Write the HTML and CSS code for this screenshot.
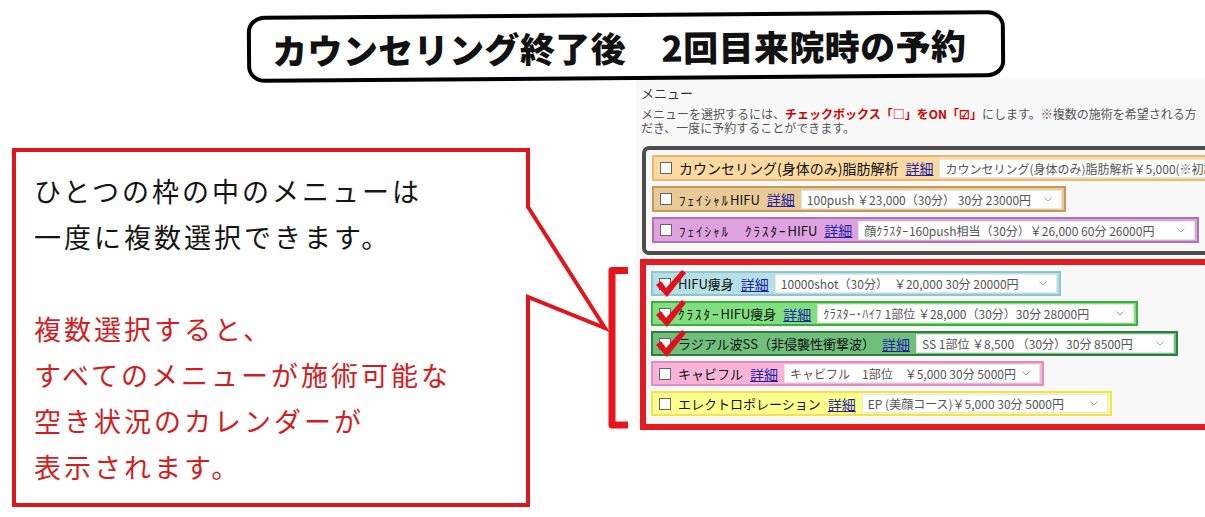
FILE: index.html
```html
<!DOCTYPE html>
<html lang="ja">
<head>
<meta charset="utf-8">
<title>カウンセリング終了後 2回目来院時の予約</title>
<link rel="stylesheet" href="styles.css">
</head>
<body>
<div class="page">
  <header class="title-wrap">
    <div class="pill"><h1 class="title">カウンセリング終了後　2回目来院時の予約</h1></div>
  </header>
  <main class="main">
    <section class="left">
      <svg class="deco" width="636" height="439" viewBox="0 0 636 439" aria-hidden="true">
        <path d="M14,72 H528 V129 L605,250 L528,219 V427 H14 Z" fill="#fff" stroke="#e0161d" stroke-width="4" stroke-linejoin="miter"/>
        <path d="M628,192.5 H612 V347 H628" fill="none" stroke="#e8141c" stroke-width="7" stroke-linejoin="round"/>
      </svg>
      <div class="callout">
        <p class="note">ひとつの枠の中のメニューは<br>一度に複数選択できます。</p>
        <p class="note red">複数選択すると、<br>すべてのメニューが施術可能な<br>空き状況のカレンダーが<br>表示されます。</p>
      </div>
    </section>
    <section class="panel">
      <div class="menu-head">メニュー</div>
      <div class="desc">メニューを選択するには、<b class="em">チェックボックス「□」をON「☑」</b>にします。※複数の施術を希望される方<br>だき、一度に予約することができます。</div>
      <div class="group gray">
        <div class="row c-counsel">
          <span class="cb"></span><span class="label big">カウンセリング(身体のみ)脂肪解析</span><a class="link">詳細</a>
          <span class="sel w300"><span class="opt">カウンセリング(身体のみ)脂肪解析￥5,000(※初診料別)</span></span>
        </div>
        <div class="row c-facial">
          <span class="cb"></span><span class="label"><span class="hw">ﾌｪｲｼｬﾙ</span>HIFU</span><a class="link">詳細</a>
          <span class="sel w261"><span class="opt">100push ￥23,000（30分） 30分 23000円</span><svg class="chev" width="8" height="5" viewBox="0 0 8 5"><polyline points="0.5,0.5 4,4 7.5,0.5" fill="none" stroke="#a0a0a0" stroke-width="1"/></svg></span>
        </div>
        <div class="row c-fcluster">
          <span class="cb"></span><span class="label"><span class="hw">ﾌｪｲｼｬﾙ　ｸﾗｽﾀｰ</span>HIFU</span><a class="link">詳細</a>
          <span class="sel w337"><span class="opt">顔<span class="hw">ｸﾗｽﾀｰ</span>160push相当（30分）￥26,000 60分 26000円</span><svg class="chev" width="8" height="5" viewBox="0 0 8 5"><polyline points="0.5,0.5 4,4 7.5,0.5" fill="none" stroke="#a0a0a0" stroke-width="1"/></svg></span>
        </div>
      </div>
      <div class="group red-box">
        <div class="row c-hifu">
          <span class="cb"></span><span class="label">HIFU痩身</span><a class="link">詳細</a>
          <span class="sel w282"><span class="opt">10000shot（30分）　￥20,000 30分 20000円</span><svg class="chev" width="8" height="5" viewBox="0 0 8 5"><polyline points="0.5,0.5 4,4 7.5,0.5" fill="none" stroke="#a0a0a0" stroke-width="1"/></svg></span>
          <svg class="check" width="34" height="30" viewBox="0 0 34 30"><path d="M2,16 L7,12 L12,19 L28,1 L32,4 L13,28 Z" fill="#e0101c"/></svg>
        </div>
        <div class="row c-cluster">
          <span class="cb"></span><span class="label"><span class="hw">ｸﾗｽﾀｰ</span>HIFU痩身</span><a class="link">詳細</a>
          <span class="sel w317"><span class="opt"><span class="hw">ｸﾗｽﾀｰ･ﾊｲﾌ</span> 1部位 ￥28,000（30分）30分 28000円</span><svg class="chev" width="8" height="5" viewBox="0 0 8 5"><polyline points="0.5,0.5 4,4 7.5,0.5" fill="none" stroke="#a0a0a0" stroke-width="1"/></svg></span>
          <svg class="check" width="34" height="30" viewBox="0 0 34 30"><path d="M2,16 L7,12 L12,19 L28,1 L32,4 L13,28 Z" fill="#e0101c"/></svg>
        </div>
        <div class="row c-radial">
          <span class="cb"></span><span class="label">ラジアル波SS（非侵襲性衝撃波）</span><a class="link">詳細</a>
          <span class="sel w258"><span class="opt">SS 1部位 ￥8,500 （30分）30分 8500円</span><svg class="chev" width="8" height="5" viewBox="0 0 8 5"><polyline points="0.5,0.5 4,4 7.5,0.5" fill="none" stroke="#a0a0a0" stroke-width="1"/></svg></span>
          <svg class="check" width="34" height="30" viewBox="0 0 34 30"><path d="M2,16 L7,12 L12,19 L28,1 L32,4 L13,28 Z" fill="#e0101c"/></svg>
        </div>
        <div class="row c-cavi">
          <span class="cb"></span><span class="label">キャビフル</span><a class="link">詳細</a>
          <span class="sel w256"><span class="opt">キャビフル　1部位　￥5,000 30分 5000円</span><svg class="chev" width="8" height="5" viewBox="0 0 8 5"><polyline points="0.5,0.5 4,4 7.5,0.5" fill="none" stroke="#a0a0a0" stroke-width="1"/></svg></span>
        </div>
        <div class="row c-ep">
          <span class="cb"></span><span class="label">エレクトロポレーション</span><a class="link">詳細</a>
          <span class="sel w246"><span class="opt">EP (美顔コース)￥5,000 30分 5000円</span><svg class="chev" width="8" height="5" viewBox="0 0 8 5"><polyline points="0.5,0.5 4,4 7.5,0.5" fill="none" stroke="#a0a0a0" stroke-width="1"/></svg></span>
        </div>
      </div>
    </section>
  </main>
</div>
</body>
</html>
```
FILE: styles.css
```css
* { box-sizing: border-box; }
html, body { margin: 0; padding: 0; background: #fff; }
body {
  width: 1205px;
  height: 517px;
  overflow: hidden;
  font-family: "Noto Sans CJK JP", "Noto Sans", sans-serif;
  color: #111;
}
.page { width: 1205px; height: 517px; }

/* title */
.title-wrap {
  height: 78px;
  padding-top: 13px;
  position: relative;
  z-index: 2;
}
.pill {
  margin-left: 247px;
  width: 758px;
  height: 67px;
  border: 4.5px solid #000;
  border-radius: 18px / 16px;
  background: #fff;
  display: flex;
  align-items: center;
  padding-left: 21px;
  transform: rotate(-0.45deg);
}
.title {
  margin: 0;
  font-size: 35px;
  font-weight: 900;
  letter-spacing: 0.4px;
  line-height: 1;
  color: #111;
  white-space: nowrap;
}

/* main */
.main { display: flex; align-items: flex-start; }
.left {
  position: relative;
  width: 636px;
  height: 439px;
  flex: none;
}
.deco { position: absolute; left: 0; top: 0; z-index: 0; }
.callout {
  position: relative;
  z-index: 1;
  margin: 70px 0 0 12px;
  width: 518px;
  padding: 20px 0 0 22px;
}
.note {
  margin: 0;
  font-size: 27px;
  line-height: 46px;
  letter-spacing: 3px;
  color: #151515;
  white-space: nowrap;
}
.note + .note { margin-top: 46px; }
.note.red { color: #d41d22; }

/* right panel */
.panel {
  flex: 1;
  min-width: 0;
  background: #f8f8f8;
  overflow: hidden;
  padding: 7px 0 0 5px;
}
.menu-head {
  font-size: 13px;
  line-height: 16px;
  color: #333;
}
.desc {
  margin-top: 6px;
  font-size: 12px;
  line-height: 14px;
  color: #555;
  white-space: nowrap;
}
.em { color: #d00000; font-weight: 700; }

.group {
  display: flex;
  flex-direction: column;
  align-items: flex-start;
}
.gray {
  margin: 11px 0 0 1px;
  width: 620px;
  border: 4px solid #4d4d4d;
  border-radius: 7px;
  padding: 5px 0 8px 6px;
  gap: 5px;
}
.red-box {
  margin: 4px 0 0 -1px;
  width: 620px;
  border: 6px solid #e31b23;
  border-right: none;
  padding: 6px 0 8px 5px;
  gap: 5px;
}

.row {
  position: relative;
  display: flex;
  align-items: center;
  height: 26px;
  border: 2px solid;
  padding: 0 2px 0 6px;
  white-space: nowrap;
}
.red-box .row { height: 25px; }
.cb {
  width: 12px;
  height: 12px;
  border: 1px solid #666;
  background: #fff;
  margin-right: 7px;
  flex: none;
}
.label {
  font-size: 13px;
  color: #111;
  margin-right: 7px;
}
.label.big { font-size: 14px; }
.hw { letter-spacing: 2px; }
.sel .hw { letter-spacing: 0.5px; }
.link {
  font-size: 14px;
  color: #1f1fa8;
  text-decoration: underline;
  padding-right: 1px;
  margin-right: 5px;
  cursor: pointer;
}
.sel {
  display: flex;
  align-items: center;
  justify-content: space-between;
  height: 19px;
  background: #fff;
  border: 1px solid #e6e6e6;
  padding: 0 9px 0 5px;
  font-size: 12px;
  color: #555;
  overflow: hidden;
  flex: none;
}
.opt { overflow: hidden; }
.chev { flex: none; }
.w300 { width: 300px; }
.w261 { width: 261px; }
.w337 { width: 337px; }
.w282 { width: 282px; }
.w317 { width: 317px; }
.w258 { width: 258px; }
.w256 { width: 256px; }
.w246 { width: 246px; }

.check { position: absolute; left: 1px; top: -4px; }

.c-counsel { background: #fcd9a1; border-color: #e9b877; }
.c-facial { background: #e9c995; border-color: #c49a58; }
.c-fcluster { background: #dfa2e0; border-color: #ad74b4; }
.c-hifu { background: #b6dfe6; border-color: #8ec6cf; }
.c-cluster { background: #80e080; border-color: #3fae3f; }
.c-radial { background: #70c07c; border-color: #2f7f3e; }
.c-cavi { background: #f8b4d7; border-color: #e28dbd; }
.c-ep { background: #ffff8e; border-color: #efe255; }
```
